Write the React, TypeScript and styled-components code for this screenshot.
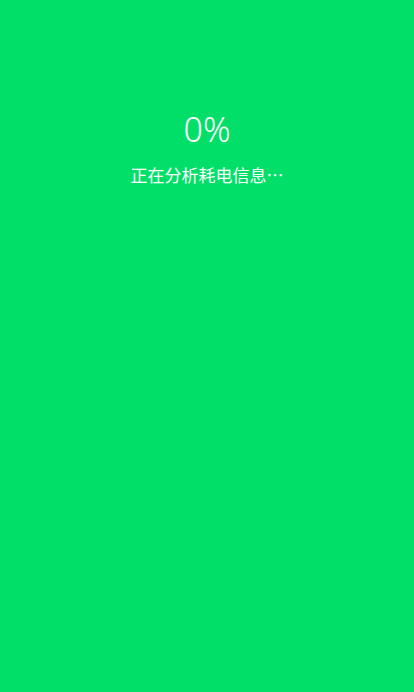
import React from "react";
import styled, { createGlobalStyle } from "styled-components";

const Global = createGlobalStyle`
  html, body { margin: 0; padding: 0; background: #02df68; }
  #root { min-height: 100vh; }
`;

const Screen = styled.div`
  min-height: 100vh;
  background: #02df68;
  display: flex;
  flex-direction: column;
  align-items: center;
  padding-top: 108px;
  box-sizing: border-box;
  font-family: "Noto Sans", "Noto Sans CJK SC", sans-serif;
  color: #ffffff;
`;

const Percent = styled.div`
  font-size: 34px;
  font-weight: 300;
  line-height: 42px;
`;

const Status = styled.div`
  margin-top: 14px;
  font-size: 17px;
  line-height: 22px;
  font-family: "Noto Sans CJK SC", sans-serif;
`;

export default function App() {
  return (
    <>
      <Global />
      <Screen>
        <Percent>0%</Percent>
        <Status>正在分析耗电信息…</Status>
      </Screen>
    </>
  );
}
